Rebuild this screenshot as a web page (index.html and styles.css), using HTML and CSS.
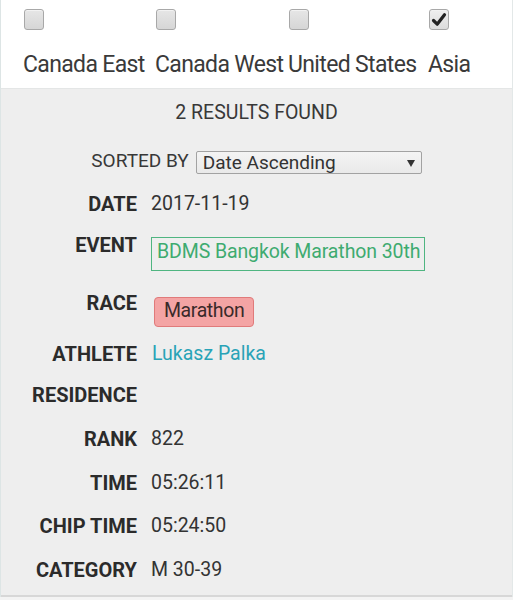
FILE: index.html
```html
<!DOCTYPE html>
<html lang="en">
<head>
<meta charset="utf-8">
<title>Results</title>
<link rel="stylesheet" href="styles.css">
</head>
<body>
<div class="page">
  <div class="regions">
    <label class="region">
      <span class="checkbox"></span>
      <span class="region-name">Canada East</span>
    </label>
    <label class="region">
      <span class="checkbox"></span>
      <span class="region-name">Canada West</span>
    </label>
    <label class="region">
      <span class="checkbox"></span>
      <span class="region-name">United States</span>
    </label>
    <label class="region">
      <span class="checkbox checkbox--checked">
        <svg viewBox="0 0 20 21" width="20" height="21" aria-hidden="true"><path d="M4.5 11.5 L8.2 15.2 L15.5 5.8" fill="none" stroke="#222" stroke-width="3.2" stroke-linecap="round" stroke-linejoin="round"/></svg>
      </span>
      <span class="region-name">Asia</span>
    </label>
  </div>

  <div class="results">
    <div class="results-count">2 RESULTS FOUND</div>
    <div class="sort">
      <span class="sort-label">SORTED BY</span>
      <div class="select">
        <span>Date Ascending</span>
        <svg class="select-arrow" viewBox="0 0 8 7" width="8" height="7" aria-hidden="true"><path d="M0 0 H8 L4 7 Z" fill="#333"/></svg>
      </div>
    </div>

    <div class="rows">
      <div class="row">
        <div class="row-label">DATE</div>
        <div class="row-value">2017-11-19</div>
      </div>
      <div class="row row--event">
        <div class="row-label">EVENT</div>
        <div class="row-value"><span class="event-box">BDMS Bangkok Marathon 30th</span></div>
      </div>
      <div class="row">
        <div class="row-label">RACE</div>
        <div class="row-value"><span class="race-pill">Marathon</span></div>
      </div>
      <div class="row row--after-pill">
        <div class="row-label">ATHLETE</div>
        <div class="row-value athlete">Lukasz Palka</div>
      </div>
      <div class="row row--tight">
        <div class="row-label">RESIDENCE</div>
        <div class="row-value"></div>
      </div>
      <div class="row">
        <div class="row-label">RANK</div>
        <div class="row-value">822</div>
      </div>
      <div class="row">
        <div class="row-label">TIME</div>
        <div class="row-value">05:26:11</div>
      </div>
      <div class="row row--tight-1">
        <div class="row-label">CHIP TIME</div>
        <div class="row-value">05:24:50</div>
      </div>
      <div class="row">
        <div class="row-label">CATEGORY</div>
        <div class="row-value">M 30-39</div>
      </div>
    </div>
  </div>
</div>
</body>
</html>
```
FILE: styles.css
```css
* { box-sizing: border-box; }

html, body {
  margin: 0;
  padding: 0;
}

body {
  background: #f3f3f3;
  font-family: Roboto, "Liberation Sans", sans-serif;
  color: #333;
  width: 513px;
  height: 600px;
  overflow: hidden;
}

.page {
  border-left: 1px solid #dde5e5;
  border-right: 1px solid #e3e8e8;
}

/* top regions */
.regions {
  background: #fff;
  height: 89px;
  padding: 9px 0 0 22px;
  display: grid;
  grid-template-columns: 132px 133px 140px auto;
  border-bottom: 1px solid #e4e6e6;
}

.region {
  display: flex;
  flex-direction: column;
  align-items: flex-start;
}

.checkbox {
  display: block;
  width: 20px;
  height: 21px;
  margin-left: 1px;
  border: 1px solid #a8a8a8;
  border-radius: 3px;
  background: linear-gradient(#e6e6e6, #d6d6d6);
  box-shadow: inset 0 1px 0 #f2f2f2;
}

.checkbox--checked {
  background: linear-gradient(#efefef, #dcdcdc);
}

.checkbox--checked svg {
  display: block;
  margin: -1px 0 0 -1px;
}

.region-name {
  margin-top: 21px;
  font-size: 23px;
  line-height: 27px;
  letter-spacing: -0.65px;
  color: #3a3a3a;
  white-space: nowrap;
}

/* results */
.results {
  background: #eeeeee;
  padding: 12px 0 13px;
  border-bottom: 2px solid #d7d7d7;
}

.results-count {
  text-align: center;
  font-size: 19.5px;
  line-height: 23px;
  color: #383838;
}

.sort {
  margin-top: 27px;
  display: flex;
  justify-content: center;
  align-items: flex-start;
  gap: 7px;
}

.sort-label {
  font-size: 19px;
  line-height: 20px;
  color: #383838;
}

.select {
  width: 226px;
  height: 23px;
  border: 1px solid #a2a2a2;
  border-radius: 2px;
  background: linear-gradient(#f4f4f4, #e9e9e9);
  display: flex;
  align-items: flex-start;
  justify-content: space-between;
  padding: 0 6px;
  font-size: 19px;
  line-height: 21px;
  color: #333;
}

.select-arrow {
  margin-top: 8px;
}

/* rows */
.rows {
  margin-top: 18px;
}

.row {
  display: grid;
  grid-template-columns: 136px 1fr;
  column-gap: 14px;
  align-items: start;
  margin-top: 20px;
}

.row:first-child { margin-top: 0; }
.row--event { margin-top: 17px; }
.row--after-pill { margin-top: 15px; }
.row--tight { margin-top: 17px; }
.row--tight-1 { margin-top: 19px; }

.row-label {
  text-align: right;
  font-weight: 700;
  font-size: 20px;
  line-height: 24px;
  color: #2b2b2b;
  white-space: nowrap;
}

.row-value {
  font-size: 19.5px;
  line-height: 24px;
  color: #333;
  min-height: 24px;
}

.event-box {
  display: inline-block;
  margin-top: 4px;
  height: 34px;
  padding: 0 4px 3px 5px;
  border: 1.5px solid #4fb581;
  color: #3eab70;
  line-height: 28px;
  letter-spacing: -0.1px;
  white-space: nowrap;
}

.race-pill {
  display: inline-block;
  margin: 6px 0 0 3px;
  height: 30px;
  padding: 0 9px 2px;
  border: 1px solid #e07a7a;
  border-radius: 4px;
  background: #f4a4a4;
  color: #3a2a2a;
  line-height: 26px;
  letter-spacing: -0.4px;
}

.athlete {
  color: #29a3b7;
  padding-left: 1px;
}
```
